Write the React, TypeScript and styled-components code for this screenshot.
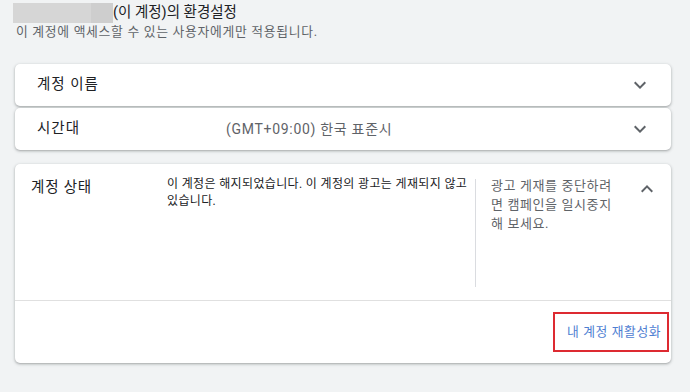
import React from 'react'
import styled, { createGlobalStyle } from 'styled-components'

const GlobalStyle = createGlobalStyle`
  html, body {
    margin: 0;
    padding: 0;
    background: #f1f3f4;
  }
  body {
    font-family: Roboto, "Noto Sans CJK KR", sans-serif;
    color: #202124;
  }
`

const Page = styled.div`
  width: 690px;
  height: 392px;
  padding: 3px 19px 0 13px;
  box-sizing: border-box;
  overflow: hidden;
`

const TitleRow = styled.div`
  display: flex;
  align-items: center;
  height: 20px;
`

const Redacted = styled.span<{ $w: number; $shade: string }>`
  display: block;
  width: ${p => p.$w}px;
  height: 20px;
  background: ${p => p.$shade};
`

const Title = styled.h1`
  margin: 0;
  font-size: 14.5px;
  font-weight: 400;
  line-height: 20px;
  color: #202124;
`

const Subtitle = styled.p`
  margin: 1px 0 0 3px;
  font-size: 12.8px;
  line-height: 16px;
  letter-spacing: 0.7px;
  color: #5f6368;
`

const Panel = styled.section<{ $top?: number }>`
  margin: ${p => p.$top ?? 0}px 0 0 2px;
  background: #fff;
  border-radius: 5px;
  box-shadow: 0 1px 2px rgba(60, 64, 67, 0.3), 0 1px 3px 1px rgba(60, 64, 67, 0.12);
`

const Row = styled.div`
  display: flex;
  align-items: center;
  height: 42px;
  padding: 0 19px 0 22px;
`

const RowLabel = styled.div`
  width: 189px;
  font-size: 14.5px;
  line-height: 20px;
  letter-spacing: 1px;
  color: #202124;
`

const RowValue = styled.div`
  flex: 1;
  font-size: 14px;
  line-height: 20px;
  letter-spacing: 0.7px;
  color: #5f6368;
`

const IconBox = styled.span`
  display: flex;
  width: 24px;
  height: 24px;
  align-items: center;
  justify-content: center;
`

const Chevron: React.FC<{ up?: boolean }> = ({ up }) => (
  <IconBox>
    <svg width="24" height="24" viewBox="0 0 24 24" style={up ? { transform: 'rotate(180deg)' } : undefined}>
      <path d="M16.59 8.59L12 13.17 7.41 8.59 6 10l6 6 6-6z" fill="#5f6368" />
    </svg>
  </IconBox>
)

const StatusHead = styled.div`
  display: flex;
  align-items: flex-start;
  height: 137px;
  padding: 12px 12px 0 16px;
  box-sizing: border-box;
  border-bottom: 1px solid #e0e0e0;
`

const StatusLabel = styled.div`
  width: 136px;
  padding-top: 2px;
  font-size: 14.5px;
  line-height: 20px;
  letter-spacing: 0.8px;
  color: #202124;
`

const StatusBody = styled.div`
  width: 308px;
  font-size: 12px;
  line-height: 17px;
  letter-spacing: 0.35px;
  color: #202124;
  word-break: keep-all;
`

const VDivider = styled.div`
  width: 1px;
  height: 108px;
  margin-top: 3px;
  background: #dadce0;
`

const Hint = styled.div`
  width: 126px;
  margin-left: 15px;
  flex-shrink: 0;
  font-size: 13px;
  line-height: 19px;
  letter-spacing: 0.6px;
  color: #5f6368;
`

const HeadAction = styled.div`
  flex: 1;
  display: flex;
  justify-content: flex-end;
  padding-top: 1px;
`

const Footer = styled.div`
  display: flex;
  justify-content: flex-end;
  height: 62px;
  padding: 11px 2px 0 0;
  box-sizing: border-box;
`

const Highlight = styled.div`
  display: flex;
  align-items: center;
  width: 116px;
  height: 40px;
  box-sizing: border-box;
  border: 2px solid #dd2a31;
  padding-left: 12px;
`

const LinkButton = styled.a`
  font-size: 12.8px;
  line-height: 18px;
  letter-spacing: 0.6px;
  color: #4f80d2;
  text-decoration: none;
  white-space: nowrap;
`

export default function App() {
  return (
    <>
      <GlobalStyle />
      <Page>
        <TitleRow>
          <Redacted $w={78} $shade="#d6d6d6" />
          <Redacted $w={22} $shade="#cecece" />
          <Title>(이 계정)의 환경설정</Title>
        </TitleRow>
        <Subtitle>이 계정에 액세스할 수 있는 사용자에게만 적용됩니다.</Subtitle>

        <Panel $top={24}>
          <Row>
            <RowLabel>계정 이름</RowLabel>
            <RowValue />
            <Chevron />
          </Row>
        </Panel>
        <Panel $top={2}>
          <Row>
            <RowLabel>시간대</RowLabel>
            <RowValue>(GMT+09:00) 한국 표준시</RowValue>
            <Chevron />
          </Row>
        </Panel>

        <Panel $top={14}>
          <StatusHead>
            <StatusLabel>계정 상태</StatusLabel>
            <StatusBody>이 계정은 해지되었습니다. 이 계정의 광고는 게재되지 않고 있습니다.</StatusBody>
            <VDivider />
            <Hint>광고 게재를 중단하려면 캠페인을 일시중지해 보세요.</Hint>
            <HeadAction>
              <Chevron up />
            </HeadAction>
          </StatusHead>
          <Footer>
            <Highlight>
              <LinkButton href="#">내 계정 재활성화</LinkButton>
            </Highlight>
          </Footer>
        </Panel>
      </Page>
    </>
  )
}
